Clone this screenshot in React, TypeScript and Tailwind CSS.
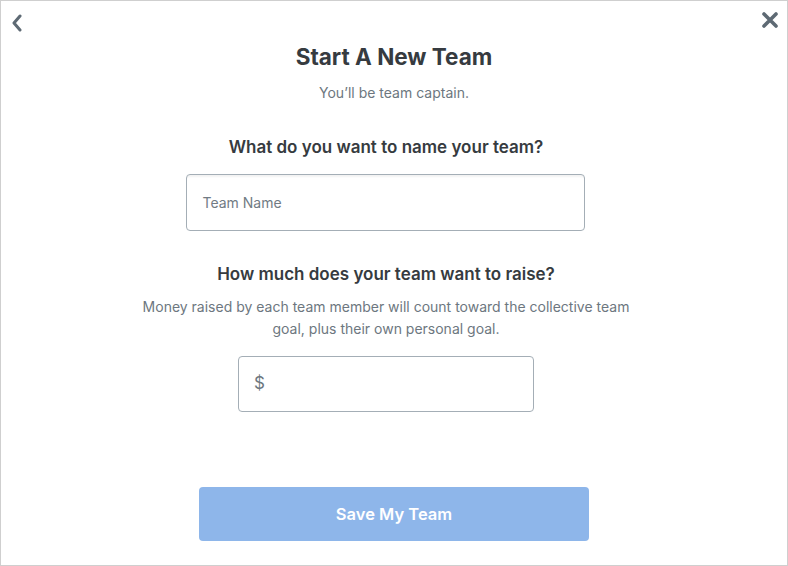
import React from "react";

export default function App() {
  return (
    <div
      className="w-[788px] h-[566px] border border-[#cfcfcf] bg-white relative flex flex-col items-center"
      style={{ fontFamily: "Inter, 'Open Sans', sans-serif" }}
    >
      <button className="absolute left-[8px] top-[13px] w-[16px] h-[18px] flex items-center justify-center">
        <svg width="12" height="18" viewBox="0 0 12 18">
          <path d="M9 2 L3 9 L9 16" fill="none" stroke="#5e6a74" strokeWidth="3" strokeLinecap="round" strokeLinejoin="round" />
        </svg>
      </button>
      <button className="absolute right-[8px] top-[10px] w-[18px] h-[18px] flex items-center justify-center">
        <svg width="18" height="18" viewBox="0 0 18 18">
          <path d="M3 3 L15 15 M15 3 L3 15" fill="none" stroke="#5e6a74" strokeWidth="3.6" strokeLinecap="round" />
        </svg>
      </button>

      <h1 className="mt-[41px] text-[22.5px] leading-[30px] font-bold text-[#363b40]">Start A New Team</h1>
      <p className="mt-[11px] text-[14px] leading-[20px] text-[#6d7780]">You’ll be team captain.</p>

      <h2 className="mt-[33px] mr-[16px] text-[17px] leading-[22px] font-semibold text-[#363b40]">What do you want to name your team?</h2>
      <div className="mt-[16px] mr-[18px] w-[399px] h-[57px] rounded-[4px] border border-[#a4aeb6] shadow-[inset_0_3px_2px_-1px_rgba(0,0,0,0.05)] flex items-center px-[16px]">
        <span className="text-[14px] text-[#717b84]">Team Name</span>
      </div>

      <h2 className="mt-[32px] mr-[16px] text-[17px] leading-[22px] font-semibold text-[#363b40]">How much does your team want to raise?</h2>
      <p className="mt-[11px] mr-[16px] w-[500px] text-center text-[14px] leading-[22px] text-[#6d7780]">
        Money raised by each team member will count toward the collective team goal, plus their own personal goal.
      </p>
      <div className="mt-[16px] mr-[16px] w-[296px] h-[56px] rounded-[4px] border border-[#a4aeb6] flex items-center px-[15px]">
        <span className="text-[17px] text-[#6d7780]">$</span>
      </div>

      <button className="mt-[75px] w-[390px] h-[54px] rounded-[4px] bg-[#8eb6ea] text-white text-[16.5px] font-semibold">
        Save My Team
      </button>
    </div>
  );
}
